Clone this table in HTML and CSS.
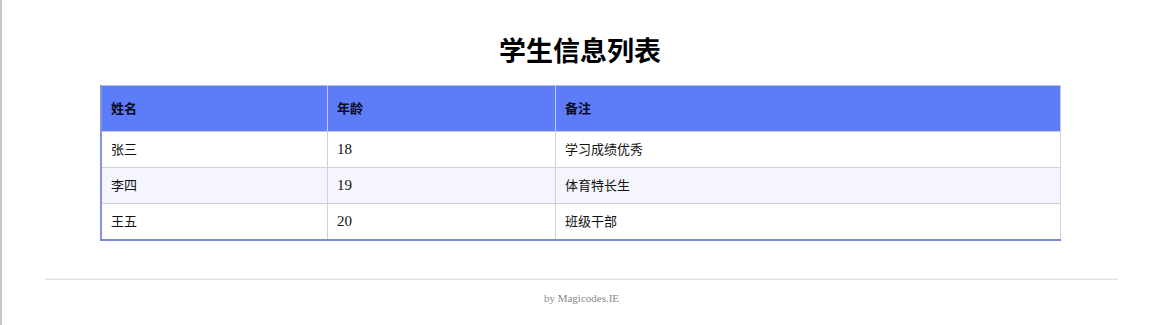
FILE: index.html
```html
<!DOCTYPE html>
<html lang="zh-CN">
<head>
<meta charset="utf-8">
<title>学生信息列表</title>
<link rel="stylesheet" href="styles.css">
</head>
<body>
<div class="page">
  <h1 class="title">学生信息列表</h1>
  <div class="table-wrap">
    <table class="students">
      <thead>
        <tr><th class="c1">姓名</th><th class="c2">年龄</th><th>备注</th></tr>
      </thead>
      <tbody>
        <tr><td>张三</td><td class="num">18</td><td>学习成绩优秀</td></tr>
        <tr><td>李四</td><td class="num">19</td><td>体育特长生</td></tr>
        <tr><td>王五</td><td class="num">20</td><td>班级干部</td></tr>
      </tbody>
    </table>
  </div>
  <footer class="footer">
    <div class="rule"></div>
    <p class="credit">by Magicodes.IE</p>
  </footer>
</div>
</body>
</html>
```

FILE: styles.css
```css
html, body {
  margin: 0;
  padding: 0;
  background: #ffffff;
}
body {
  border-left: 2px solid #c8c8c8;
  min-height: 325px;
  box-sizing: border-box;
  font-family: "Liberation Serif", "Noto Sans CJK SC", serif;
  color: #111;
}
.page {
  display: flex;
  flex-direction: column;
}
.title {
  margin: 36px 0 17px;
  font-family: "Liberation Sans", "Noto Sans CJK SC", sans-serif;
  font-weight: 700;
  font-size: 27px;
  line-height: 32px;
  text-align: center;
  color: #000;
}
.table-wrap {
  padding: 0 97px 0 98px;
}
.students {
  width: 100%;
  border-collapse: collapse;
  font-size: 13px;
  line-height: 15px;
  border-left: 2px solid #8593e2;
  border-bottom: 2px solid #7d89d6;
  border-top: 1px solid #b7bde8;
  border-right: 1px solid #c4c6d6;
}
.students th,
.students td {
  text-align: left;
  padding: 10px 9px;
  border: 1px solid #cfd0da;
}
.students td.num {
  font-size: 15px;
}
.students th {
  background: #5d7cf8;
  padding: 15px 9px;
  font-weight: 700;
  color: #0a0a20;
  border-color: #c8cbe8;
  border-top: none;
}
.students th.c1 { width: 207px; }
.students th.c2 { width: 209px; }
.students tbody tr:nth-child(even) td {
  background: #f4f5fd;
}
.students tbody tr:last-child td {
  border-bottom: none;
}
.footer {
  padding: 0 40px 0 43px;
  margin-top: 37px;
}
.rule {
  height: 0;
  border-top: 1px solid #f2f2f2;
  border-bottom: 1px solid #e2e2e2;
}
.credit {
  margin: 11px 0 0;
  text-align: center;
  font-size: 11px;
  line-height: 14px;
  color: #8a8a8a;
}
```
